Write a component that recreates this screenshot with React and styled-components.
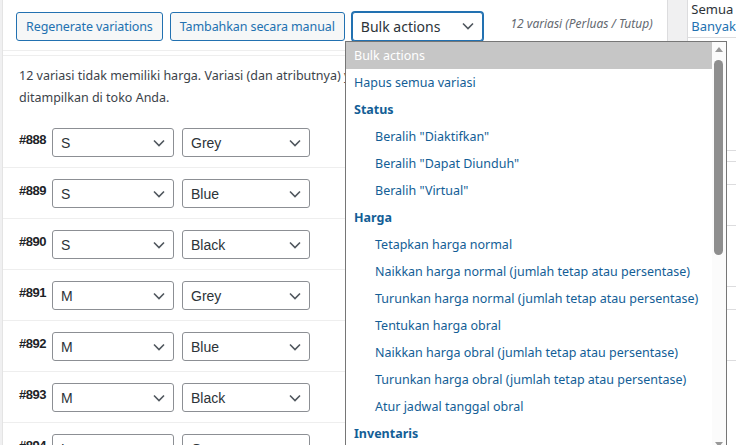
import React from "react";
import styled, { createGlobalStyle } from "styled-components";

const G = createGlobalStyle`
  body{margin:0;background:#f0f0f1;font-family:"Noto Sans","Open Sans",sans-serif;font-size:12.5px;color:#3c434a;overflow:hidden;}
`;
const Page = styled.div`display:flex;width:736px;height:445px;position:relative;overflow:hidden;`;
const Main = styled.div`width:675px;background:#fff;border-left:1px solid #e4e4e4;border-right:1px solid #dcdcde;margin-left:2px;`;
const Gutter = styled.div`width:20px;`;
const Side = styled.div`flex:1;background:#fff;border-left:1px solid #dcdcde;font-size:13px;`;
const Toolbar = styled.div`display:flex;align-items:center;gap:7px;padding:12px 14px 10px 13px;border-bottom:1px solid #eee;height:28px;`;
const Btn = styled.button`height:29px;padding:0 9px;border:1px solid #2271b1;border-radius:3px;background:#f6f7f7;color:#2271b1;font:12.5px "Noto Sans",sans-serif;letter-spacing:-.1px;`;
const Sel = styled.div`display:flex;align-items:center;justify-content:space-between;box-sizing:border-box;
  width:${p=>p.w}px;height:29px;padding:0 8px;border:1px solid ${p=>p.blue?"#2271b1":"#8c8f94"};border-radius:3px;
  ${p=>p.blue?"box-shadow:0 0 0 1px #2271b1;":""}color:#2c3338;font-size:14px;background:#fff;
  font-family:${p=>p.blue?'"Noto Sans",sans-serif':'"Liberation Sans",Arial,sans-serif'};`;
const Count = styled.span`margin-left:auto;font-style:italic;color:#646970;font-size:12px;margin-top:-6px;`;
const Notice = styled.p`margin:4px 0 0;padding:9px 16px 8px 16px;border-top:1px solid #eee;line-height:22px;color:#3c434a;width:600px;`;
const Row = styled.div`display:flex;align-items:flex-start;gap:8px;padding:11px 0 10px 16px;border-bottom:1px solid #eee;height:29px;`;
const Num = styled.b`width:25px;font-size:13px;color:#1d2327;padding-top:4px;letter-spacing:-.5px;font-family:"Liberation Sans",Arial,sans-serif;`;
const Drop = styled.div`position:absolute;left:345px;top:41px;width:380px;height:410px;background:#fff;border:1px solid #767676;display:flex;`;
const List = styled.div`flex:1;`;
const Item = styled.div`height:27px;line-height:27px;padding-left:${p=>p.ind?29:8}px;color:${p=>p.hl?"#fff":"#135e96"};
  background:${p=>p.hl?"#c6c6c6":"transparent"};font-weight:${p=>p.grp?700:400};font-size:12.5px;white-space:nowrap;`;
const Scroll = styled.div`width:14px;position:relative;background:#fbfbfb;`;
const Thumb = styled.div`position:absolute;left:2px;top:18px;width:9px;height:195px;border-radius:5px;background:#8e8e8e;`;
const Arrow = styled.div`position:absolute;left:3px;${p=>p.up?"top:5px;border-bottom:5px solid #999;":"bottom:5px;border-top:5px solid #999;"}border-left:4px solid transparent;border-right:4px solid transparent;`;
const SideLine = styled.div`height:${p=>p.h}px;border-bottom:1px solid ${p=>p.plain?"transparent":"#dcdcde"};color:${p=>p.plain?"#2c3338":"#2271b1"};padding-left:3px;white-space:nowrap;overflow:hidden;`;

const Chev = () => <svg width="12" height="8" viewBox="0 0 12 8"><path d="M1 1.5l5 5 5-5" fill="none" stroke="#50575e" strokeWidth="1.6"/></svg>;

const rows = [["888","S","Grey"],["889","S","Blue"],["890","S","Black"],["891","M","Grey"],["892","M","Blue"],["893","M","Black"],["894","L","Grey"]];
const items = [["Bulk actions",0,0,1],["Hapus semua variasi"],["Status",0,1],["Beralih \"Diaktifkan\"",1],["Beralih \"Dapat Diunduh\"",1],["Beralih \"Virtual\"",1],["Harga",0,1],["Tetapkan harga normal",1],["Naikkan harga normal (jumlah tetap atau persentase)",1],["Turunkan harga normal (jumlah tetap atau persentase)",1],["Tentukan harga obral",1],["Naikkan harga obral (jumlah tetap atau persentase)",1],["Turunkan harga obral (jumlah tetap atau persentase)",1],["Atur jadwal tanggal obral",1],["Inventaris",0,1],["Atur stok",1]];

export default function App(){
  return <Page><G/>
    <Main>
      <Toolbar>
        <Btn>Regenerate variations</Btn>
        <Btn>Tambahkan secara manual</Btn>
        <Sel w={131} blue>Bulk actions<Chev/></Sel>
        <Count>12 variasi (Perluas / Tutup)</Count>
      </Toolbar>
      <Notice>12 variasi tidak memiliki harga. Variasi (dan atributnya) yang tidak memiliki harga tidak akan ditampilkan di toko Anda.</Notice>
      {rows.map(r=><Row key={r[0]}><Num>#{r[0]}</Num><Sel w={122}>{r[1]}<Chev/></Sel><Sel w={128}>{r[2]}<Chev/></Sel></Row>)}
    </Main>
    <Gutter/>
    <Side>
      <SideLine h={16} plain>Semua</SideLine>
      <SideLine h={20}>Banyak</SideLine>
      <SideLine h={112}/><SideLine h={10}/><SideLine h={22}/><SideLine h={40}/>
      <SideLine h={60}/><SideLine h={22}/><SideLine h={50}/>
    </Side>
    <Drop>
      <List>{items.map((it,i)=><Item key={i} ind={it[1]} grp={it[2]} hl={it[3]}>{it[0]}</Item>)}</List>
      <Scroll><Arrow up/><Thumb/><Arrow/></Scroll>
    </Drop>
  </Page>;
}
